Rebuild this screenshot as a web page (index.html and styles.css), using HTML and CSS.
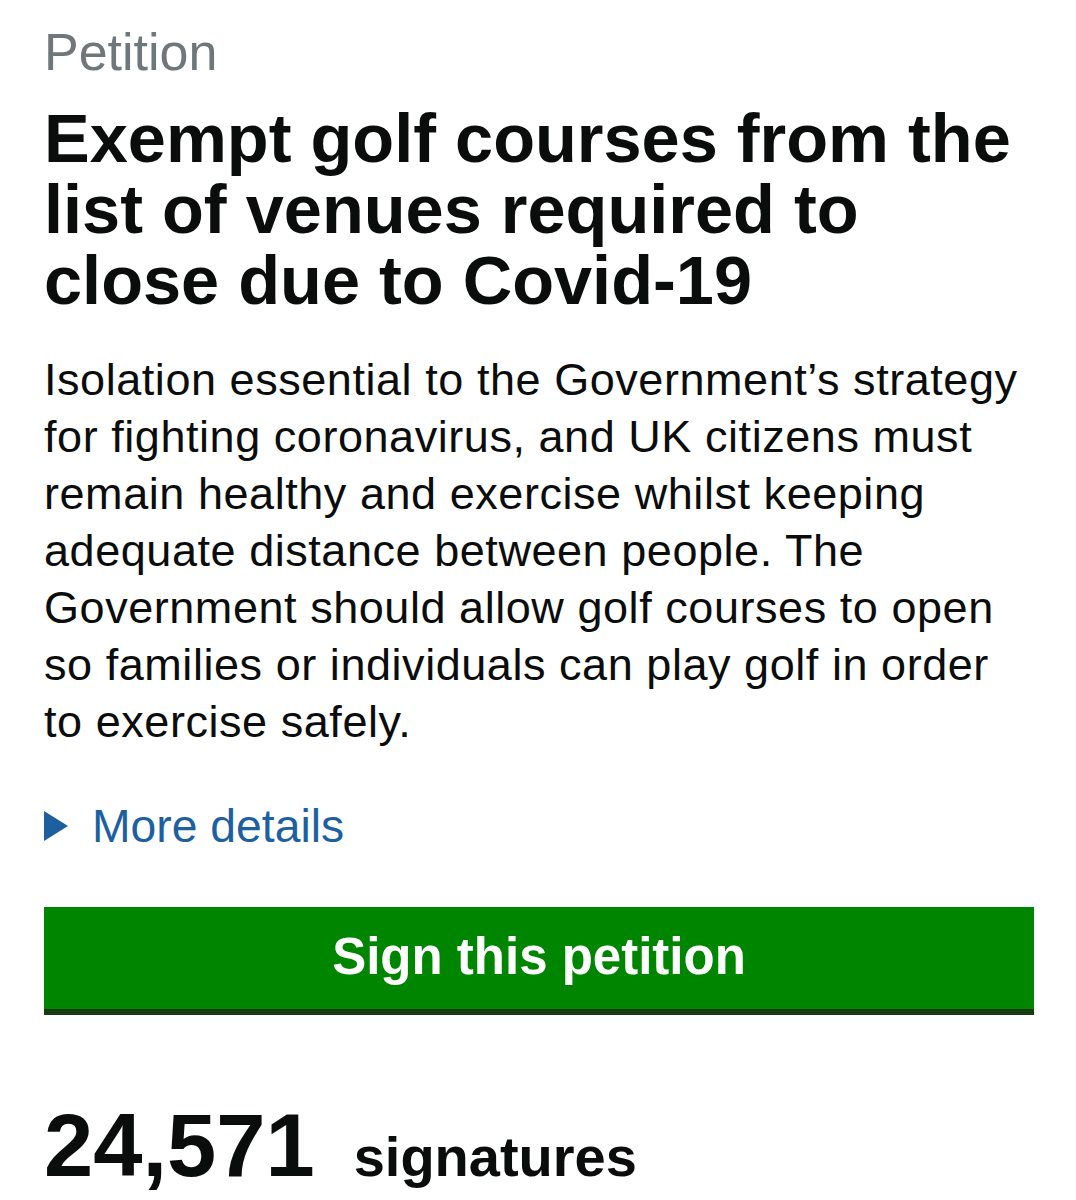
FILE: index.html
```html
<!DOCTYPE html>
<html lang="en">
<head>
<meta charset="utf-8">
<title>Petition</title>
<link rel="stylesheet" href="styles.css">
</head>
<body>
<main class="page">
  <span class="caption">Petition</span>
  <h1 class="title">Exempt golf courses from the list of venues required to close due to Covid-19</h1>
  <p class="lede">Isolation essential to the Government’s strategy for fighting coronavirus, and UK citizens must remain healthy and exercise whilst keeping adequate distance between people. The Government should allow golf courses to open so families or individuals can play golf in order to exercise safely.</p>
  <div class="details">
    <span class="arrow"></span>
    <span class="details-link">More details</span>
  </div>
  <button class="sign-button" type="button">Sign this petition</button>
  <p class="count"><span class="count-number">24,571</span><span class="count-label">signatures</span></p>
</main>
</body>
</html>
```

FILE: styles.css
```css
html, body {
  margin: 0;
  padding: 0;
  background: #ffffff;
}

body {
  font-family: "Liberation Sans", Arial, Helvetica, sans-serif;
  color: #0b0c0c;
}

.page {
  width: 990px;
  padding: 24px 0 0 44px;
  display: flex;
  flex-direction: column;
}

.caption {
  display: block;
  color: #6f777b;
  font-size: 52px;
  line-height: 56px;
}

.title {
  margin: 23px 0 0 0;
  font-size: 68.5px;
  line-height: 71px;
  font-weight: 700;
}

.lede {
  margin: 35px 0 0 0;
  max-width: 980px;
  font-size: 45px;
  letter-spacing: 0.55px;
  line-height: 57px;
}

.details {
  display: flex;
  align-items: center;
  gap: 24px;
  margin-top: 50px;
}

.arrow {
  width: 0;
  height: 0;
  border-top: 15px solid transparent;
  border-bottom: 15px solid transparent;
  border-left: 24px solid #1d5f9f;
}

.details-link {
  color: #1d5f9f;
  font-size: 46.3px;
  line-height: 52px;
}

.sign-button {
  margin-top: 55px;
  width: 990px;
  height: 102px;
  border: 0;
  border-radius: 0;
  background: #008500;
  box-shadow: 0 6px 0 #183b12;
  color: #ffffff;
  font-family: inherit;
  font-size: 51px;
  font-weight: 700;
  padding: 0 0 4px 0;
  cursor: pointer;
}

.count {
  margin: 92px 0 0 0;
  display: flex;
  align-items: baseline;
  gap: 39px;
}

.count-number {
  font-size: 88.5px;
  font-weight: 700;
  line-height: 90px;
}

.count-label {
  font-size: 56px;
  font-weight: 700;
}
```
